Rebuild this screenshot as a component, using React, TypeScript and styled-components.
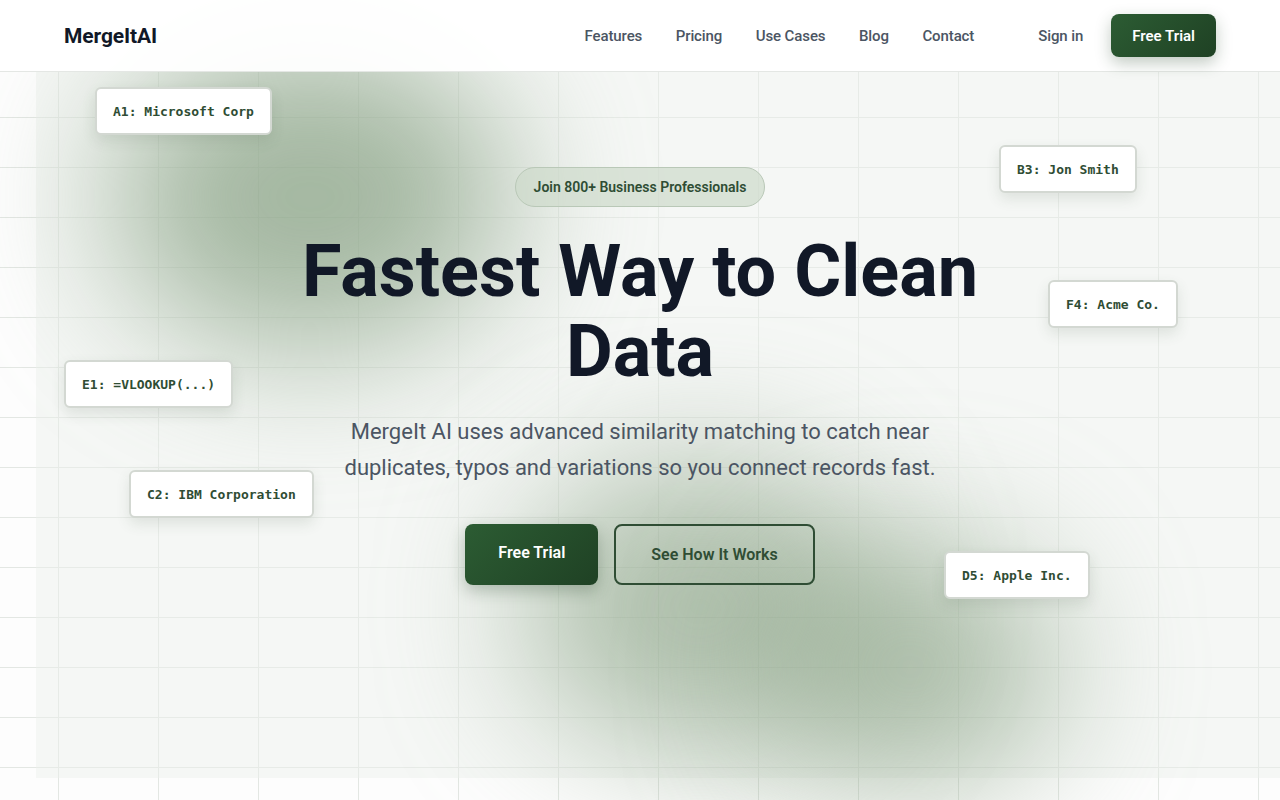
import styled, { createGlobalStyle } from "styled-components";

const GlobalStyle = createGlobalStyle`
  html, body {
    margin: 0;
    padding: 0;
    background: #ffffff;
  }
  body {
    font-family: Roboto, "Noto Sans", "Liberation Sans", sans-serif;
    -webkit-font-smoothing: antialiased;
  }
  * {
    box-sizing: border-box;
  }
`;

const GREEN_TEXT = "#2f4d34";
const INK = "#111827";
const MUTED = "#4b5563";

const Page = styled.div`
  position: relative;
  width: 100%;
  height: 800px;
  overflow: hidden;
  background: #ffffff;
`;

const Header = styled.header`
  position: relative;
  z-index: 10;
  height: 72px;
  display: flex;
  align-items: center;
  padding: 0 64px;
  background: rgba(255, 255, 255, 0.94);
  border-bottom: 1px solid #e4e7e4;
`;

const Logo = styled.div`
  font-size: 21px;
  font-weight: 700;
  color: ${INK};
  letter-spacing: -0.1px;
`;

const Nav = styled.nav`
  margin-left: auto;
  display: flex;
  align-items: center;
  gap: 33.5px;
`;

const NavLink = styled.a`
  font-size: 15px;
  font-weight: 500;
  color: ${MUTED};
  text-decoration: none;
  letter-spacing: -0.1px;
`;

const Actions = styled.div`
  display: flex;
  align-items: center;
  gap: 28px;
  margin-left: 64px;
`;

const PrimaryButton = styled.button<{ large?: boolean }>`
  border: none;
  border-radius: 8px;
  color: #ffffff;
  font-family: inherit;
  font-weight: 600;
  font-size: ${({ large }) => (large ? "16px" : "15px")};
  height: ${({ large }) => (large ? "61px" : "43px")};
  padding: ${({ large }) => (large ? "0 33px 4px" : "0 21px")};
  background: linear-gradient(135deg, #2c5c33 0%, #1f4124 100%);
  box-shadow: 0 6px 16px rgba(31, 65, 36, 0.28);
  cursor: pointer;
`;

const OutlineButton = styled.button`
  height: 61px;
  padding: 0 35px;
  border: 2px solid #2f4d34;
  border-radius: 8px;
  background: transparent;
  color: ${GREEN_TEXT};
  font-family: inherit;
  font-weight: 600;
  font-size: 16px;
  cursor: pointer;
`;

const Hero = styled.section`
  position: relative;
  height: 728px;
  background-color: #fdfdfd;
  background-image: linear-gradient(to right, #e3e7e3 1px, transparent 1px),
    linear-gradient(to bottom, #e3e7e3 1px, transparent 1px);
  background-size: 100px 50px;
  background-position: 58px 45px;
`;

const Tint = styled.div`
  position: absolute;
  left: 36px;
  right: 0;
  top: 0;
  bottom: 22px;
  background: rgba(234, 240, 234, 0.45);
`;

const Blob = styled.div<{ x: number; y: number; w: number; h: number; alpha: number }>`
  position: absolute;
  left: ${({ x }) => x}px;
  top: ${({ y }) => y}px;
  width: ${({ w }) => w}px;
  height: ${({ h }) => h}px;
  border-radius: 50%;
  background: rgba(128, 155, 124, ${({ alpha }) => alpha});
  filter: blur(70px);
`;

const Content = styled.div`
  position: relative;
  z-index: 2;
  display: flex;
  flex-direction: column;
  align-items: center;
  padding-top: 95px;
  text-align: center;
`;

const Badge = styled.div`
  height: 40px;
  display: flex;
  align-items: center;
  padding: 0 18px;
  border-radius: 999px;
  border: 1px solid #b9c8b7;
  background: rgba(205, 218, 203, 0.7);
  color: ${GREEN_TEXT};
  font-size: 14px;
  font-weight: 600;
`;

const Title = styled.h1`
  margin: 25px 0 0;
  font-size: 72px;
  line-height: 80px;
  font-weight: 700;
  color: ${INK};
  max-width: 720px;
`;

const Lead = styled.p`
  margin: 22px 0 0;
  font-size: 22px;
  line-height: 36px;
  color: ${MUTED};
  max-width: 610px;
`;

const ButtonRow = styled.div`
  display: flex;
  gap: 16px;
  margin-top: 38px;
`;

const CellCard = styled.div<{ x: number; y: number }>`
  position: absolute;
  z-index: 3;
  left: ${({ x }) => x}px;
  top: ${({ y }) => y}px;
  height: 48px;
  display: flex;
  align-items: center;
  padding: 0 16px;
  background: #ffffff;
  border: 2px solid #d3d8d2;
  border-radius: 6px;
  box-shadow: 0 6px 14px rgba(60, 80, 60, 0.12);
  font-family: "DejaVu Sans Mono", "Liberation Mono", monospace;
  font-size: 13px;
  font-weight: 700;
  color: ${GREEN_TEXT};
  white-space: nowrap;
`;

const cells = [
  { label: "A1: Microsoft Corp", x: 95, y: 15 },
  { label: "B3: Jon Smith", x: 999, y: 73 },
  { label: "F4: Acme Co.", x: 1048, y: 208 },
  { label: "E1: =VLOOKUP(...)", x: 64, y: 288 },
  { label: "C2: IBM Corporation", x: 129, y: 398 },
  { label: "D5: Apple Inc.", x: 944, y: 479 },
];

const links = ["Features", "Pricing", "Use Cases", "Blog", "Contact"];

export default function App() {
  return (
    <>
      <GlobalStyle />
      <Page>
        <Header>
          <Logo>MergeItAI</Logo>
          <Nav>
            {links.map((l) => (
              <NavLink key={l} href="#">
                {l}
              </NavLink>
            ))}
          </Nav>
          <Actions>
            <NavLink href="#">Sign in</NavLink>
            <PrimaryButton>Free Trial</PrimaryButton>
          </Actions>
        </Header>

        <Hero>
          <Tint />
          {/* soft green glows behind the copy */}
          <Blob x={110} y={-30} w={400} h={310} alpha={0.7} />
          <Blob x={520} y={390} w={360} h={290} alpha={0.6} />
          <Blob x={760} y={470} w={300} h={250} alpha={0.6} />

          {cells.map((c) => (
            <CellCard key={c.label} x={c.x} y={c.y}>
              {c.label}
            </CellCard>
          ))}

          <Content>
            <Badge>Join 800+ Business Professionals</Badge>
            <Title>Fastest Way to Clean Data</Title>
            <Lead>
              MergeIt AI uses advanced similarity matching to catch near
              duplicates, typos and variations so you connect records fast.
            </Lead>
            <ButtonRow>
              <PrimaryButton large>Free Trial</PrimaryButton>
              <OutlineButton>See How It Works</OutlineButton>
            </ButtonRow>
          </Content>
        </Hero>
      </Page>
    </>
  );
}
